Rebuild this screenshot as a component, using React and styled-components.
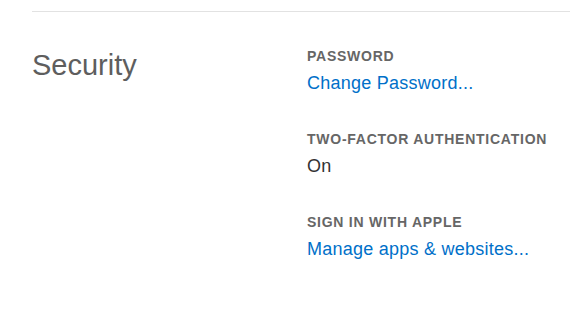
import React from "react";
import styled, { createGlobalStyle } from "styled-components";

const Global = createGlobalStyle`
  html, body { margin: 0; padding: 0; background: #ffffff; }
  body { font-family: "Liberation Sans", Arial, sans-serif; }
`;

const Page = styled.div`
  padding: 11px 0 0 32px;
`;

const Section = styled.section`
  border-top: 1px solid #e2e2e2;
  padding-top: 36px;
  display: grid;
  grid-template-columns: 275px 1fr;
`;

const Title = styled.h2`
  margin: 0;
  font-size: 29px;
  line-height: 34px;
  font-weight: 400;
  color: #5e5e5e;
`;

const Fields = styled.div`
  display: flex;
  flex-direction: column;
  gap: 37px;
`;

const Field = styled.div`
  display: flex;
  flex-direction: column;
  gap: 8px;
`;

const Label = styled.div`
  font-size: 14px;
  line-height: 16px;
  font-weight: 700;
  color: #666666;
  letter-spacing: 0.75px;
`;

const Value = styled.a`
  font-size: 18px;
  line-height: 22px;
  letter-spacing: 0.25px;
  color: ${(p) => (p.$link ? "#0070c9" : "#333333")};
  text-decoration: none;
  cursor: ${(p) => (p.$link ? "pointer" : "default")};
`;

const fields = [
  { label: "PASSWORD", value: "Change Password...", link: true },
  { label: "TWO-FACTOR AUTHENTICATION", value: "On", link: false },
  { label: "SIGN IN WITH APPLE", value: "Manage apps & websites...", link: true },
];

export default function App() {
  return (
    <Page>
      <Global />
      <Section>
        <Title>Security</Title>
        <Fields>
          {fields.map((f) => (
            <Field key={f.label}>
              <Label>{f.label}</Label>
              <Value $link={f.link}>{f.value}</Value>
            </Field>
          ))}
        </Fields>
      </Section>
    </Page>
  );
}
